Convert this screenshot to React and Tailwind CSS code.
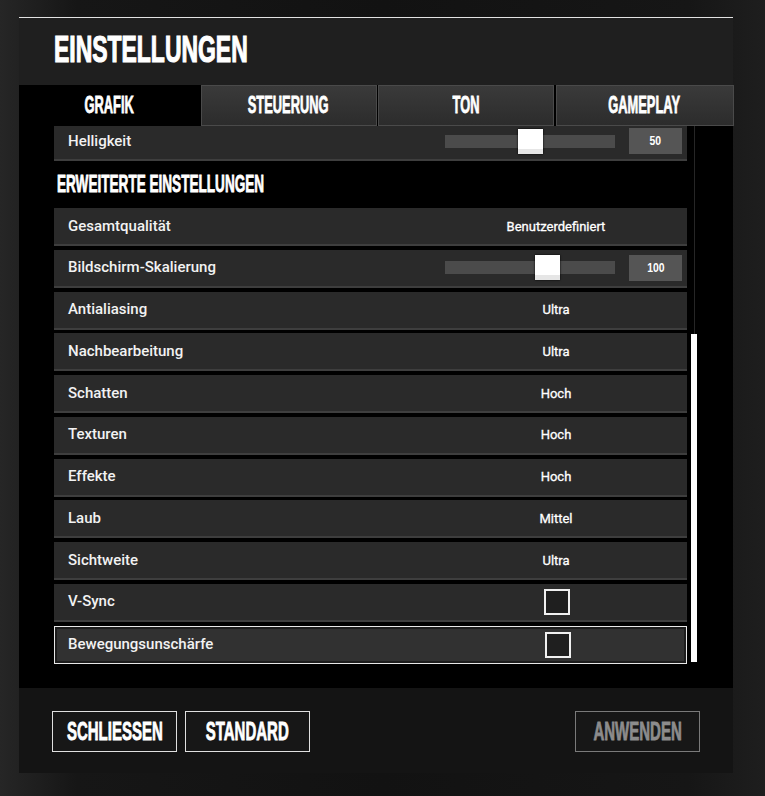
import React from "react";

const cond = "font-['Liberation_Sans','Arial',sans-serif] font-bold";

function Row({ label, children, highlight }) {
  return (
    <div
      className={
        "h-[38px] flex items-center " +
        (highlight
          ? "bg-[#313131] border border-[#e8e8e8] shadow-[inset_0_0_0_2px_#1c1c1c]"
          : "bg-[#2a2a2a] border-b-2 border-[#3e3e3e]")
      }
    >
      <div
        className={
          "w-[391px] text-[15px] font-medium text-[#f2f2f2] font-['Roboto',sans-serif] leading-none " +
          (highlight ? "pl-[13px]" : "pl-[14px]")
        }
      >
        {label}
      </div>
      {children}
    </div>
  );
}

function Value({ text }) {
  return (
    <div className="w-[222px] text-center text-[13px] font-normal text-white font-['Roboto',sans-serif] leading-none [-webkit-text-stroke:0.3px_white]">
      {text}
    </div>
  );
}

function Slider({ left, value }) {
  return (
    <div className="flex items-center">
      <div className="relative w-[170px] h-[13px] bg-[#4b4b4b]">
        <div
          className="absolute top-[-6px] w-[25px] h-[25px] bg-white border-b-[5px] border-[#e6e6e6] shadow-[0_0_2px_#000]"
          style={{ left }}
        />
      </div>
      <div className="ml-[14px] w-[53px] h-[26px] bg-[#555555] flex items-center justify-center">
        <span className={"text-[13px] text-white inline-block scale-x-[0.8] " + cond}>{value}</span>
      </div>
    </div>
  );
}

function Check() {
  return (
    <div className="w-[222px] flex justify-center">
      <div className="w-[26px] h-[26px] border-2 border-[#f0f0f0] bg-[#1f1f1f] ml-[2px]" />
    </div>
  );
}

function Tab({ label, active }) {
  return (
    <div
      className={
        "flex items-center justify-center " +
        (active
          ? "bg-black"
          : "bg-[linear-gradient(180deg,#3a3a3a_0%,#2c2c2c_100%)] border border-[#4a4a4a]")
      }
    >
      <span className={"text-[23px] text-white inline-block scale-x-[0.56] leading-none [-webkit-text-stroke:0.8px_white] " + cond}>
        {label}
      </span>
    </div>
  );
}

function Button({ label, disabled }) {
  return (
    <div
      className={
        "w-[125px] h-[41px] flex items-center justify-center bg-[#171717] border " +
        (disabled ? "border-[#7a7a7a]" : "border-[#e0e0e0]")
      }
    >
      <span
        className={
          "text-[25px] inline-block scale-x-[0.6] leading-none " +
          cond +
          (disabled
            ? " text-[#8c8c8c] [-webkit-text-stroke:0.8px_#8c8c8c]"
            : " text-white [-webkit-text-stroke:0.8px_white]")
        }
      >
        {label}
      </span>
    </div>
  );
}

export default function App() {
  const rows = [
    ["Antialiasing", "Ultra"],
    ["Nachbearbeitung", "Ultra"],
    ["Schatten", "Hoch"],
    ["Texturen", "Hoch"],
    ["Effekte", "Hoch"],
    ["Laub", "Mittel"],
    ["Sichtweite", "Ultra"],
  ];
  return (
    <div className="w-[765px] h-[796px] overflow-hidden bg-[linear-gradient(90deg,#262626_0%,#161616_10%,#121212_50%,#161616_90%,#1e1e1e_100%)]">
      <div className="ml-[19px] pt-[17px] w-[714px] flex flex-col">
        {/* header */}
        <div className="h-[68px] bg-[#1f1f1f] border-t border-[#e2e2e2] pl-[35px] flex items-center">
          <span className={"text-[37px] text-white inline-block scale-x-[0.62] origin-left leading-none -mt-[4px] [-webkit-text-stroke:1.2px_white] " + cond}>
            EINSTELLUNGEN
          </span>
        </div>
        {/* tabs */}
        <div className="h-[41px] grid grid-cols-[180px_176px_176px_178px] gap-[1.5px] bg-black">
          <Tab label="GRAFIK" active />
          <Tab label="STEUERUNG" />
          <Tab label="TON" />
          <Tab label="GAMEPLAY" />
        </div>
        {/* content */}
        <div className="h-[562px] bg-black overflow-hidden flex">
          <div className="ml-[35px] w-[633px] -mt-[3px] flex flex-col">
            <Row label="Helligkeit">
              <Slider left={73} value="50" />
            </Row>
            <div className="h-[47px] flex items-center pl-[3px]">
              <span className={"text-[23px] text-white inline-block scale-x-[0.59] origin-left leading-none [-webkit-text-stroke:0.8px_white] " + cond}>
                ERWEITERTE EINSTELLUNGEN
              </span>
            </div>
            <div className="flex flex-col gap-[3.75px]">
              <Row label="Gesamtqualität">
                <Value text="Benutzerdefiniert" />
              </Row>
              <Row label="Bildschirm-Skalierung">
                <Slider left={90} value="100" />
              </Row>
              {rows.map(([l, v]) => (
                <Row key={l} label={l}>
                  <Value text={v} />
                </Row>
              ))}
              <Row label="V-Sync">
                <Check />
              </Row>
              <Row label="Bewegungsunschärfe" highlight>
                <Check />
              </Row>
            </div>
          </div>
          {/* scrollbar */}
          <div className="ml-[4px] w-[6px] flex flex-col">
            <div className="h-[208px] w-px mx-auto bg-[#262626]" />
            <div className="h-[328px] w-[6px] bg-white" />
          </div>
        </div>
        {/* footer */}
        <div className="h-[85px] bg-[#141414] flex items-center pl-[33px] pr-[33px] pt-[2px]">
          <Button label="SCHLIESSEN" />
          <div className="ml-[8px]">
            <Button label="STANDARD" />
          </div>
          <div className="ml-auto">
            <Button label="ANWENDEN" disabled />
          </div>
        </div>
      </div>
    </div>
  );
}
